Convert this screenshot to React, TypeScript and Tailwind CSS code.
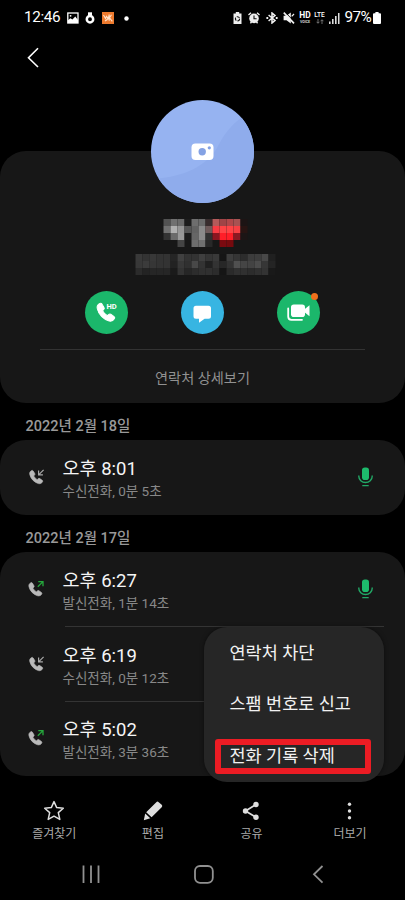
import type { ReactNode } from "react";

type Call = {
  time: string;
  detail: string;
  outgoing?: boolean;
  recorded?: boolean;
};

const groups: { date: string; calls: Call[] }[] = [
  {
    date: "2022년 2월 18일",
    calls: [{ time: "오후 8:01", detail: "수신전화, 0분 5초", recorded: true }],
  },
  {
    date: "2022년 2월 17일",
    calls: [
      { time: "오후 6:27", detail: "발신전화, 1분 14초", outgoing: true, recorded: true },
      { time: "오후 6:19", detail: "수신전화, 0분 12초" },
      { time: "오후 5:02", detail: "발신전화, 3분 36초", outgoing: true },
    ],
  },
];

// Pixelated name and number, one hex colour per 7px cell ("-" = empty)
const mosaic = [
  "- - - - 525252 707070 6b6b6b 1c1c1c 6e6e6e 6b6b6b 382c2d b45a5a a04446 b0484a a85252 1c1414 - - - -",
  "- - - - 707070 b0b0b0 969696 555555 626262 8a8a8a 6e5a5a f83c44 ff4446 ff4446 f84044 281412 - - - -",
  "- - - - 333333 6b6b6b 999999 1c1c1c 666666 8a8a8a 303030 8c1620 ff1e28 ff1e28 8c1822 1c1515 - - - -",
  "- - - - - - 444444 - 6e6e6e 707070 282828 - 7a0a10 760a0e - - - - - -",
  "- - - - - - - - - - - - - - - - - - - -",
  "393939 333333 383838 333333 333333 252525 404040 333333 333333 3f3f3f 353535 393939 151515 3d3d3d 353535 2c2c2c 3c3c3c 3d3d3d 484848 202020",
  "383838 3b3b3b 363636 333333 333333 222222 383838 303030 484848 333333 202020 333333 272727 333333 505050 454545 434343 4c4c4c 363636 242424",
  "2b2b2b 232323 262626 262626 262626 1a1a1a 333333 262626 2c2c2c 303030 303030 2c2c2c 151515 2a2a2a 303030 303030 2c2c2c 303030 333333 191919",
];

const handset =
  "M3.2 1.2 C1.4 2 .2 3.8 .8 6 C2 11.2 6.2 15.6 11.4 17 C13.4 17.4 15.2 16.6 16.2 14.8 C16.6 14 16.4 13.4 15.8 13 L12.8 10.9 C12.2 10.5 11.5 10.6 11 11.1 L9.8 12.2 C8 11.2 6.4 9.6 5.5 7.8 L6.6 6.6 C7.1 6.1 7.2 5.5 6.8 4.9 L4.9 1.7 C4.5 1.1 3.9 .9 3.2 1.2Z";

function StatusBar() {
  return (
    <div className="flex h-9 items-center pl-6 pr-6 text-white">
      <span className="w-[43px] text-[15.3px] leading-none tracking-[-0.4px]">12:46</span>
      <svg className="h-3 w-3" viewBox="0 0 12 12" fill="none">
        <rect x="0.8" y="1" width="10.2" height="10" stroke="#fff" strokeWidth="1.3" />
        <path d="M1 10V8.3l2.4-2 2 1.3L8.3 4.6 11 8v3H1z" fill="#fff" />
        <circle cx="3.6" cy="3.8" r="0.9" fill="#fff" />
      </svg>
      <svg className="ml-[6px] h-3 w-[10px]" viewBox="0 0 10 12" fill="none">
        <circle cx="5" cy="7.2" r="3.2" stroke="#fff" strokeWidth="2.5" />
        <path d="M3 3.6V.3h4v3.3z" fill="#fff" />
      </svg>
      <svg className="ml-[7px] h-3 w-3" viewBox="0 0 12 12" fill="none">
        <rect width="12" height="12" fill="#ed7a2e" />
        <path d="M1.5 3l2 3.5 1-2.2 1.8 2.2 1-4M4.4 8l1.5-1.5M7.2 3.5v5.2M9.5 2.8l-2 3 2.8 3.5M3 9l2.4-1.5" stroke="#ffe3cc" strokeWidth="1.1" />
      </svg>
      <svg className="ml-[10px] size-[5px]" viewBox="0 0 5 5" fill="#fff">
        <circle cx="2.5" cy="2.5" r="2.2" />
      </svg>

      <div className="ml-auto flex items-center">
        <svg className="h-3 w-[9px]" viewBox="0 0 9 12" fill="none">
          <path d="M2.8 0h3.4v1.4H8.5V12H.5V1.4h2.3z" fill="#eee" />
          <circle cx="4.5" cy="6.8" r="2.1" stroke="#111" strokeWidth="1.1" strokeDasharray="3 1.1" />
        </svg>
        <svg className="ml-[6px] h-3 w-3" viewBox="0 0 12 12" fill="none">
          <circle cx="6" cy="6.4" r="4.8" fill="#eee" />
          <path d="M.5 3 3 .7M11.5 3 9 .7M2.4 11.3l1.3-1.5M9.6 11.3 8.3 9.8" stroke="#eee" strokeWidth="1.4" />
          <path d="M6 3.6v3.1h2.6" stroke="#111" strokeWidth="1.1" />
        </svg>
        <svg className="ml-[6px] h-3 w-3" viewBox="0 0 12 12" fill="none" stroke="#f2f2f2" strokeWidth="1.5">
          <path d="M2.6 3l6.4 5.4L6 11V1l3 2.6L2.6 9" />
          <path d="M.4 6h1.8M9.8 6h1.8" strokeWidth="1.8" />
        </svg>
        <svg className="ml-[5px] h-3 w-3" viewBox="0 0 12 12" fill="none">
          <path d="M.6 3.8h2.9L7.8.6v10.8L3.5 8.2H.6z" fill="#f2f2f2" />
          <path d="M2 0 12 10.6" stroke="#000" strokeWidth="1" />
          <path d="M.8.6 11 11.4" stroke="#f2f2f2" strokeWidth="1.6" />
          <path d="M8.7 4.4 11 2" stroke="#f2f2f2" strokeWidth="1.2" />
        </svg>
        <div className="ml-[4px] flex w-[13px] flex-col items-center">
          <span className="text-[8.4px] font-bold leading-[7px]">HD</span>
          <span className="mt-[1px] text-[3.6px] font-bold leading-[4px] text-neutral-300">VOICE</span>
        </div>
        <div className="ml-[2px] flex w-[12px] flex-col items-center">
          <span className="text-[6.6px] font-medium leading-[7px]">LTE</span>
          <svg className="h-[5px] w-2" viewBox="0 0 8 5" fill="none" stroke="#888" strokeWidth="0.8">
            <path d="M2 0v4M.6 2.8 2 4.3l1.4-1.5M6 5V1M4.6 2.2 6 .7l1.4 1.5" />
          </svg>
        </div>
        <svg className="ml-[3px] h-3 w-[11px]" viewBox="0 0 11 12" fill="#ddd">
          <path d="M0 9.5h1.6V12H0zM3 7h1.6v5H3zM6 4h1.6v8H6z" />
          <path d="M9 1h1.5v11H9z" />
        </svg>
        <span className="ml-[5px] w-[28.5px] text-[15.3px] leading-none tracking-[-0.6px]">97%</span>
        <svg className="h-3 w-2" viewBox="0 0 8 12" fill="#fff">
          <path d="M2.4 0h3.2v1.3H7q1 0 1 1V11q0 1-1 1H1q-1 0-1-1V2.3q0-1 1-1h1.4z" />
        </svg>
      </div>
    </div>
  );
}

function Mosaic() {
  return (
    <div className="mx-auto mt-4 grid w-[140px] translate-x-[2.5px] grid-cols-20" aria-hidden="true">
      {mosaic
        .join(" ")
        .split(" ")
        .map((c, i) => (
          <span
            key={i}
            className="size-[7px]"
            style={{ backgroundColor: c === "-" ? "transparent" : `#${c}` }}
          />
        ))}
    </div>
  );
}

function Profile() {
  return (
    <section className="mt-[71px] flex h-[252px] flex-col rounded-[26px] bg-[#171717]">
      <div className="mx-auto -mt-[51px] size-[103px] shrink-0 overflow-hidden rounded-full">
        <svg className="size-full" viewBox="0 0 103 103">
          <rect width="103" height="103" fill="#96b3f1" />
          <path d="M103 10C80 22 73 35 66 48C54 67 34 76 4 79V103H103z" fill="#8facec" />
          <rect x="40.5" y="43.5" width="22" height="16.5" rx="4" fill="#fff" />
          <circle cx="51.2" cy="51.8" r="3.7" fill="#84a2e4" />
          <circle cx="58.3" cy="47.8" r="1.6" fill="#84a2e4" />
        </svg>
      </div>
      <Mosaic />

      <div className="mt-4 flex justify-center gap-[53px]">
        <button className="size-[43px] rounded-full bg-[#1bb76b]" aria-label="음성 통화">
          <svg className="size-full" viewBox="0 0 43 43" fill="#fff">
            <path d={handset} stroke="#fff" strokeWidth="0.9" transform="translate(11.4 11) scale(1.12)" />
            <text x="21.4" y="18" fontSize="7.5" fontWeight="700">HD</text>
          </svg>
        </button>
        <button className="size-[43px] rounded-full bg-[#37b5e2]" aria-label="메시지">
          <svg className="size-full" viewBox="0 0 43 43" fill="#fff">
            <path d="M15 14.7h12.5q2.5 0 2.5 2.5v8q0 2.5-2.5 2.5H23.6L18 31.8v-4h-3q-2.5 0-2.5-2.5v-8Q12.5 14.7 15 14.7z" />
          </svg>
        </button>
        <button className="relative size-[43px] rounded-full bg-[#1bb76b]" aria-label="영상 통화">
          <svg className="size-full" viewBox="0 0 43 43" fill="#fff">
            <rect x="14" y="13.5" width="14" height="12.5" rx="2.8" />
            <path d="M27.5 18.3 32.5 14.3V25.2L27.5 21.2z" />
            <path d="M11.2 17.5v8q0 3.3 3.3 3.3H25" fill="none" stroke="#fff" strokeWidth="1.8" strokeLinecap="round" />
          </svg>
          <span className="absolute right-[2px] top-[2px] size-[7px] rounded-full bg-[#f0701c]" />
        </button>
      </div>

      <div className="mx-10 mt-[15px] h-px shrink-0 bg-[#333]" />
      <p className="mt-4 text-center text-[14.2px] leading-6 text-[#919191]">연락처 상세보기</p>
    </section>
  );
}

function CallIcon({ outgoing }: { outgoing?: boolean }) {
  return (
    <svg className="h-[18px] w-[18px]" viewBox="0 0 18 18" fill="none">
      {outgoing ? (
        <>
          <path d={handset} transform="translate(.3 1.7) scale(.83)" fill="#b9b9b9" stroke="#b9b9b9" strokeWidth="0.8" />
          <path d="M9.8 6.8 15 1.6M10.3 1.6H15V6.3" stroke="#25a83c" strokeWidth="1.3" />
        </>
      ) : (
        <>
          <path d={handset} transform="translate(1.1 1.5) scale(.83)" fill="#b9b9b9" stroke="#b9b9b9" strokeWidth="0.8" />
          <path d="M15.6 1.8 10.6 6.8M10.6 2.5v4.3h4.3" stroke="#a8a8a8" strokeWidth="1.2" />
        </>
      )}
    </svg>
  );
}

function CallRow({ call, divider }: { call: Call; divider: boolean }) {
  return (
    <li className="relative flex h-[74.5px] items-center pb-px pl-[27.5px] pr-8">
      {divider && <span className="absolute -top-[0.6px] left-[65px] right-[21px] h-px bg-[#343434]" />}
      <CallIcon outgoing={call.outgoing} />
      <div className="ml-[17px] flex-1 pt-1">
        <p className="text-[18.5px] leading-[24px] text-[#f5f5f5]">{call.time}</p>
        <p className="text-[13.5px] leading-5 text-[#888]">{call.detail}</p>
      </div>
      {call.recorded && (
        <svg className="h-5 w-[15px]" viewBox="0 0 15 20" fill="none" stroke="#22a866" strokeWidth="1.4">
          <rect x="4" y="0.5" width="7" height="12.5" rx="2.8" fill="#1dbb6c" stroke="none" />
          <path d="M.8 8.5v.8a6.7 6.2 0 0 0 13.4 0v-.8M4.3 18.6h6.4" />
        </svg>
      )}
    </li>
  );
}

function OptionsMenu() {
  return (
    <div className="absolute left-[204px] top-[627px] flex h-[155px] w-[180px] flex-col rounded-[23px] bg-[#262626] pt-2 text-[17.5px] text-[#f2f2f2] shadow-[0_0_4px_rgba(0,0,0,0.5)]">
      <button className="h-[52px] pb-4 pl-[25.5px] text-left leading-8">연락처 차단</button>
      <button className="h-[52px] pb-[18px] pl-[25.5px] text-left leading-8">스팸 번호로 신고</button>
      <button className="ml-[11px] h-[35px] w-[156px] rounded-[3px] border-[6px] border-[#ec1c24] pl-[8.5px] text-left leading-[23px]">
        전화 기록 삭제
      </button>
    </div>
  );
}

function Tab({ label, children }: { label: string; children: ReactNode }) {
  return (
    <button className="flex w-[98.6px] flex-col items-center text-[#dedede]">
      <svg className="size-[22px]" viewBox="0 0 22 22" fill="currentColor">
        {children}
      </svg>
      <span className="mt-[2px] text-[12px] leading-5 text-[#aaa]">{label}</span>
    </button>
  );
}

export default function App() {
  return (
    <main className="relative flex h-[900px] w-[405px] flex-col overflow-hidden bg-black font-[Roboto,'Noto_Sans_CJK_KR',sans-serif]">
      <StatusBar />
      <header className="h-11 pl-[27px] pt-[11px]">
        <svg className="h-[21px] w-3" viewBox="0 0 12 21" fill="none" stroke="#fff" strokeWidth="1.6">
          <path d="M11 1.3 1.5 10.7 11 20" />
        </svg>
      </header>
      <Profile />

      {groups.map((group) => (
        <section key={group.date}>
          <h2 className="h-[37.4px] pl-[25.5px] pt-3 text-[14.5px] font-medium leading-6 text-[#999]">
            {group.date}
          </h2>
          <ul className="rounded-[26px] bg-[#171717]">
            {group.calls.map((call, i) => (
              <CallRow key={call.time} call={call} divider={i > 0} />
            ))}
          </ul>
        </section>
      ))}

      <nav className="mt-auto flex h-[50px] pl-[5px]">
        <Tab label="즐겨찾기">
          <path
            d="M11 1.6 13.7 7.6 20.3 8.2 15.3 12.6 16.8 19.4 11 16.2 5.2 19.4 6.7 12.6 1.7 8.2 8.3 7.6z"
            fill="none"
            stroke="currentColor"
            strokeWidth="1.5"
            strokeLinejoin="round"
          />
        </Tab>
        <Tab label="편집">
          <path d="M14.3 2.2q1.2-1.2 2.4 0l3 2.6q1.2 1.2 0 2.4L9.6 17.2 4.2 12.2z" />
          <path d="M3.2 13.5 8.3 18.3 1.8 20.3z" />
        </Tab>
        <Tab label="공유">
          <path d="M16 4.5 5.5 11 16 17.3" fill="none" stroke="currentColor" strokeWidth="1.7" />
          <circle cx="16" cy="4.5" r="2.7" />
          <circle cx="5.5" cy="11" r="2.7" />
          <circle cx="16" cy="17.3" r="2.7" />
        </Tab>
        <Tab label="더보기">
          <circle cx="10.5" cy="4.2" r="1.7" />
          <circle cx="10.5" cy="11" r="1.7" />
          <circle cx="10.5" cy="17.7" r="1.7" />
        </Tab>
      </nav>

      <div className="flex h-[50px] shrink-0 items-start justify-between pl-[82px] pr-[81px] pt-[15px]">
        <svg className="h-[19px] w-[18px]" viewBox="0 0 18 19" stroke="#919191" strokeWidth="1.8">
          <path d="M1.5 .5v17.5M9 .5v17.5M16.5 .5v17.5" />
        </svg>
        <svg className="-ml-1 h-[19px] w-5" viewBox="0 0 20 19" fill="none" stroke="#919191" strokeWidth="1.8">
          <rect x="1" y="1" width="17.8" height="16.8" rx="5" />
        </svg>
        <svg className="h-[19px] w-3" viewBox="0 0 12 19" fill="none" stroke="#919191" strokeWidth="1.8">
          <path d="M10.5 1 2 9.3 10.5 17.7" />
        </svg>
      </div>
      <OptionsMenu />
    </main>
  );
}
